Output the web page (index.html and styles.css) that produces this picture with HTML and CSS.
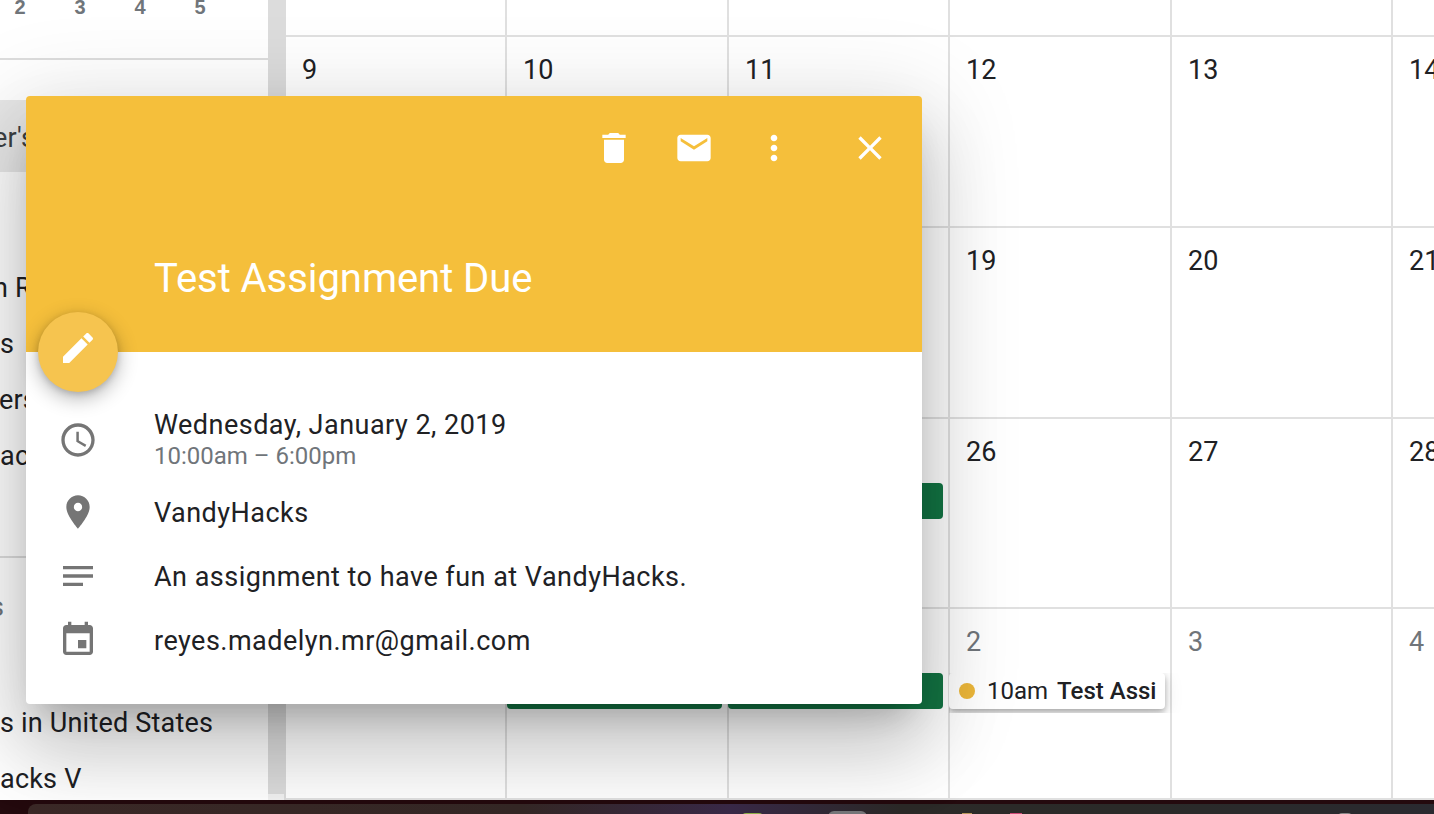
FILE: index.html
```html
<!DOCTYPE html>
<html lang="en">
<head>
<meta charset="utf-8">
<title>Calendar</title>
<link rel="stylesheet" href="styles.css">
</head>
<body>
<div class="screen">
  <div class="app">
    <aside class="sidebar">
      <div class="mini"><span>2</span><span>3</span><span>4</span><span>5</span></div>
      <div class="selected">er's</div>
      <div class="list-top">
        <div class="item item-shift">n R</div>
        <div class="item">s</div>
        <div class="item item-nudge">ers</div>
        <div class="item">ac</div>
      </div>
      <div class="list-mid"><div class="item muted">s</div></div>
      <div class="list-bottom">
        <div class="item">s in United States</div>
        <div class="item">acks V</div>
      </div>
    </aside>
    <div class="scrollbar"><div class="thumb"></div></div>
    <main class="calendar">
      <div class="cell top"></div><div class="cell top"></div><div class="cell top"></div><div class="cell top"></div><div class="cell top"></div><div class="cell top last"></div>
      <div class="cell"><div class="num">9</div></div><div class="cell"><div class="num">10</div></div><div class="cell"><div class="num">11</div></div><div class="cell"><div class="num">12</div></div><div class="cell"><div class="num">13</div></div><div class="cell last"><div class="num">14</div></div>
      <div class="cell"></div><div class="cell"></div><div class="cell"></div><div class="cell"><div class="num">19</div></div><div class="cell"><div class="num">20</div></div><div class="cell last"><div class="num">21</div></div>
      <div class="cell"></div><div class="cell"></div><div class="cell"><div class="spacer"></div><div class="bar bar-shift"></div></div><div class="cell"><div class="num">26</div></div><div class="cell"><div class="num">27</div></div><div class="cell last"><div class="num">28</div></div>
      <div class="cell"></div><div class="cell"><div class="spacer"></div><div class="bar"></div></div><div class="cell"><div class="spacer"></div><div class="bar bar-shift"></div></div>
      <div class="cell"><div class="num dim">2</div><div class="chip-clip"><div class="chip"><span class="dot"></span><span class="time">10am</span><b class="ev">Test Assi</b></div></div></div>
      <div class="cell"><div class="num dim">3</div></div><div class="cell last"><div class="num dim">4</div></div>
    </main>
  </div>
  <div class="dock">
    <div class="dock-panel">
      <span class="d d-green"></span><span class="d d-gray"></span><span class="d d-gold"></span><span class="d d-pink"></span><span class="d d-end"></span>
    </div>
  </div>

  <section class="popup">
    <header class="pop-head">
      <div class="actions">
        <span class="act"><svg viewBox="0 0 24 24"><path d="M6 19c0 1.100.9 2 2 2h8c1.100 0 2-.9 2-2V7H6v12zM19 4h-3.500l-1-1h-5l-1 1H5v2h14V4z"/></svg></span>
        <span class="act"><svg viewBox="0 0 24 24"><path d="M20 4H4c-1.100 0-1.990.9-1.990 2L2 18c0 1.100.9 2 2 2h16c1.100 0 2-.9 2-2V6c0-1.100-.9-2-2-2zm0 4l-8 5-8-5V6l8 5 8-5v2z"/></svg></span>
        <span class="act"><svg viewBox="0 0 24 24"><path d="M12 8c1.100 0 2-.9 2-2s-.9-2-2-2-2 .9-2 2 .9 2 2 2zm0 2c-1.100 0-2 .9-2 2s.9 2 2 2 2-.9 2-2-.9-2-2-2zm0 6c-1.100 0-2 .9-2 2s.9 2 2 2 2-.9 2-2-.9-2-2-2z"/></svg></span>
        <span class="act close"><svg viewBox="0 0 24 24"><path d="M19 6.410L17.590 5 12 10.590 6.410 5 5 6.410 10.590 12 5 17.590 6.410 19 12 13.410 17.590 19 19 17.590 13.410 12z"/></svg></span>
      </div>
      <h1 class="title">Test Assignment Due</h1>
    </header>
    <div class="fab"><svg viewBox="0 0 24 24"><path d="M3 17.250V21h3.750L17.810 9.940l-3.750-3.750L3 17.250zM20.710 7.040c.39-.39.39-1.020 0-1.410l-2.340-2.340c-.39-.39-1.020-.39-1.410 0l-1.830 1.830 3.750 3.750 1.830-1.830z"/></svg></div>
    <div class="pop-body">
      <div class="row row-date">
        <span class="ico"><svg viewBox="0 0 24 24"><path d="M11.990 2C6.470 2 2 6.480 2 12s4.470 10 9.990 10C17.520 22 22 17.520 22 12S17.520 2 11.990 2zM12 20c-4.420 0-8-3.580-8-8s3.580-8 8-8 8 3.580 8 8-3.580 8-8 8zm.5-13H11v6l5.250 3.150.75-1.230-4.500-2.670z"/></svg></span>
        <div class="txt"><div class="date">Wednesday, January 2, 2019</div><div class="sub">10:00am – 6:00pm</div></div>
      </div>
      <div class="row">
        <span class="ico"><svg viewBox="0 0 24 24"><path d="M12 2C8.130 2 5 5.130 5 9c0 5.250 7 13 7 13s7-7.750 7-13c0-3.870-3.130-7-7-7zm0 9.500c-1.380 0-2.500-1.120-2.500-2.500s1.120-2.500 2.500-2.500 2.500 1.120 2.500 2.500-1.120 2.500-2.500 2.500z"/></svg></span>
        <div class="txt">VandyHacks</div>
      </div>
      <div class="row">
        <span class="ico"><svg viewBox="0 0 24 24"><path d="M3 18h12v-2H3v2zM3 6v2h18V6H3zm0 7h18v-2H3v2z"/></svg></span>
        <div class="txt">An assignment to have fun at VandyHacks.</div>
      </div>
      <div class="row">
        <span class="ico"><svg viewBox="0 0 24 24"><path d="M17 12h-5v5h5v-5zM16 1v2H8V1H6v2H5c-1.110 0-1.990.9-1.990 2L3 19c0 1.100.89 2 2 2h14c1.100 0 2-.9 2-2V5c0-1.100-.9-2-2-2h-1V1h-2zm3 18H5V8h14v11z"/></svg></span>
        <div class="txt">reyes.madelyn.mr@gmail.com</div>
      </div>
    </div>
  </section>
</div>
</body>
</html>
```
FILE: styles.css
```css
* { box-sizing: border-box; }
html, body { margin: 0; height: 100%; overflow: hidden; }
body { font-family: Roboto, "Liberation Sans", sans-serif; background: #2e2a28; color: #202124; }
.screen { position: relative; width: 1434px; height: 814px; overflow: hidden; display: flex; flex-direction: column; }
.app { display: flex; height: 800px; flex: none; background: #fff; }

.sidebar { width: 268px; flex: none; display: flex; flex-direction: column; overflow: hidden; font-size: 27px; letter-spacing: .2px; }
.mini { flex: none; height: 60px; border-bottom: 2px solid #dddddd; display: flex; gap: 40px; padding: 0 0 0 10px; margin-bottom: 40px; font: bold 20px/15px "Liberation Sans", sans-serif; letter-spacing: 0; color: #70757a; align-items: flex-start; }
.mini span { width: 20px; text-align: center; }
.selected { height: 72px; background: #e8e8e8; line-height: 76px; color: #3c4043; flex: none; margin-bottom: 88px; text-indent: -7px; }
.list-top { flex: none; height: 298px; border-bottom: 2px solid #dddddd; }
.item { height: 56px; line-height: 56px; white-space: nowrap; color: #202124; }
.item-shift { text-indent: -7px; }
.item-nudge { text-indent: -1px; }
.list-mid { flex: none; height: 137px; padding-top: 21px; }
.muted { color: #70757a; text-indent: -10px; }
.list-bottom { flex: none; }

.scrollbar { width: 16px; flex: none; background: #f1f1f1; }
.thumb { height: 794px; background: #dcdcdc; }

.calendar { flex: 1; display: grid; border-left: 2px solid #dcdcdc; grid-template-columns: 221px 222px 221px 222px 221px 1fr; grid-template-rows: 37px 191px 191px 190px 191px; }
.cell { border-right: 2px solid #e0e0e0; border-bottom: 2px solid #e0e0e0; padding: 17px 5px 0 16px; overflow: visible; min-width: 0; }
.cell.top { padding: 0; }
.cell.last { border-right: 0; }
.num { font-size: 27px; line-height: 32px; color: #202124; height: 30px; }
.num.dim { color: #70757a; }
.spacer { height: 47px; }
.bar { height: 36px; background: #137544; border-radius: 4px; margin-left: -16px; }
.bar-shift { margin-left: -17px; }
.chip-clip { margin: 17px -25px 0 -17px; height: 40px; overflow: hidden; padding-right: 20px; }
.chip { height: 36px; width: 216px; background: #fff; border-radius: 4px; box-shadow: 0 3px 6px rgba(0,0,0,.3), 0 4px 20px rgba(0,0,0,.1); display: flex; align-items: center; padding-left: 10px; font-size: 24px; white-space: nowrap; color: #202124; overflow: hidden; }
.dot { width: 16px; height: 16px; border-radius: 50%; background: #ecb73a; margin-right: 12px; flex: none; }
.time { margin-right: 9px; }
.ev { font-weight: 500; }

.dock { flex: 1; background: #240a0e; padding: 4px 0 0 28px; }
.dock-panel { height: 100%; background: linear-gradient(90deg, #3c2a28 0%, #352826 35%, #3a2a48 50%, #2c2a28 62%, #2a2a28 78%, #2a2a30 100%); border-radius: 8px 0 0 0; position: relative; }
.d { display: block; position: absolute; top: 9px; height: 4px; }
.d-green { left: 714px; width: 21px; background: #8fb04a; border-radius: 10px 10px 0 0; }
.d-gray { left: 800px; width: 39px; top: 7px; height: 6px; background: #77777a; border-radius: 20px 20px 0 0; }
.d-gold { left: 934px; width: 10px; background: #b8975a; }
.d-pink { left: 982px; width: 12px; background: #d04a78; }
.d-end { left: 1310px; width: 14px; background: #888888; border-radius: 10px 10px 0 0; }

.popup { position: absolute; left: 26px; top: 96px; width: 896px; height: 608px; background: #fff; border-radius: 4px; box-shadow: 0 48px 76px 6px rgba(0,0,0,.14), 0 18px 92px 16px rgba(0,0,0,.12), 0 22px 30px -14px rgba(0,0,0,.2); }
.pop-head { height: 256px; background: #f5bf3b; border-radius: 4px 4px 0 0; padding: 32px 32px 0 128px; color: #fff; }
.actions { display: flex; justify-content: flex-end; height: 40px; }
.act { width: 40px; height: 40px; margin-left: 40px; flex: none; }
.act.close { margin-left: 56px; }
.act svg { width: 40px; height: 40px; display: block; fill: #fff; }
.title { margin: 87px 0 0; font-size: 40px; font-weight: 400; line-height: 48px; letter-spacing: -.05px; color: #fff; white-space: nowrap; }
.fab { position: absolute; left: 12px; top: 216px; width: 80px; height: 80px; border-radius: 50%; background: #f6c44f; box-shadow: 0 6px 20px rgba(0,0,0,.3), 0 2px 6px rgba(0,0,0,.15); display: flex; align-items: center; justify-content: center; padding-bottom: 8px; }
.fab svg { width: 40px; height: 40px; fill: #fff; }
.pop-body { padding-top: 56px; font-size: 27px; letter-spacing: .48px; color: #202124; }
.row { display: flex; align-items: center; height: 64px; padding-left: 32px; }
.row-date { margin-bottom: 8px; }
.ico { width: 40px; height: 40px; margin-right: 56px; flex: none; }
.ico svg { width: 40px; height: 40px; display: block; fill: #757575; }
.txt { white-space: nowrap; line-height: 32px; padding-top: 1px; }
.row-date .txt { padding-top: 0; }
.date { padding-top: 1px; margin-bottom: -1px; }
.sub { font-size: 24px; line-height: 32px; letter-spacing: 0; color: #70757a; }
```
